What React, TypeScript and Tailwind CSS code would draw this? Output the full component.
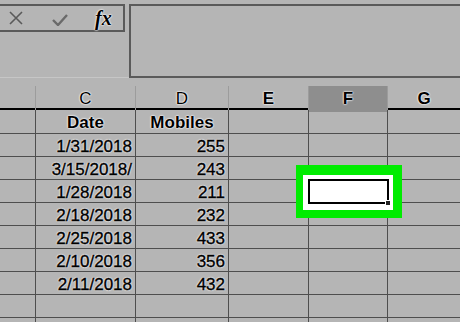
import React from 'react';

const rows: [string, string][] = [
  ['1/31/2018', '255'],
  ['3/15/2018/', '243'],
  ['1/28/2018', '211'],
  ['2/18/2018', '232'],
  ['2/25/2018', '433'],
  ['2/10/2018', '356'],
  ['2/11/2018', '432'],
  ['', ''],
  ['', ''],
];

const cols = 'grid grid-cols-[36px_100px_93px_80px_79px_1fr]';
const halo = '[text-shadow:0_0_1px_#fff,0_0_2px_#fff,0_0_2px_#fff]';
const ink = '[-webkit-text-stroke:0.4px_#000]';
const cell = 'border-r border-[#4e4e4e] h-full';

export default function App() {
  return (
    <div
      className="relative w-[460px] h-[322px] overflow-hidden bg-[#b5b5b5] text-black"
      style={{ fontFamily: '"Liberation Sans", Arial, sans-serif' }}
    >
      {/* Formula bar */}
      <div className="flex h-[78px] pt-[4px] border-b border-[#c6c6c6]">
        <div className="w-[125px] h-[28px] flex items-center border-t-2 border-r-2 border-b-2 border-[#5a5a5a]">
          <svg width="14" height="14" viewBox="0 0 14 14" className="ml-[9px]">
            <path d="M1 1L13 13M13 1L1 13" stroke="#5a5a5a" strokeWidth="1.6" />
          </svg>
          <svg width="16" height="12" viewBox="0 0 16 12" className="ml-[29px] mt-[3px]">
            <path d="M1 6L6 11L15 1" stroke="#6a6a6a" strokeWidth="2.4" fill="none" />
          </svg>
          <span
            className={`ml-[27px] text-[20px] font-bold italic leading-none ${halo}`}
            style={{ fontFamily: '"Liberation Serif", serif' }}
          >
            fx
          </span>
        </div>
        <div className="ml-[4px] flex-1 h-[74px] border-t-2 border-l-2 border-b-2 border-[#5a5a5a]" />
      </div>

      {/* Column headers */}
      <div className={`${cols} h-[32px] pt-[8px] border-b-2 border-black`}>
        <div className="border-r border-[#9c9c9c]" />
        <div className={`border-r border-[#9c9c9c] flex items-center justify-center text-[17px] ${halo}`}>C</div>
        <div className={`border-r border-[#9c9c9c] flex items-center justify-center text-[17px] ${halo}`}>D</div>
        <div className={`border-r border-[#9c9c9c] flex items-center justify-center text-[17px] font-bold ${halo}`}>E</div>
        <div className={`bg-[#8e8e8e] border-r border-[#9c9c9c] flex items-center justify-center text-[17px] font-bold ${halo}`}>F</div>
        <div className={`flex items-center justify-center text-[17px] font-bold ${halo}`}>G</div>
      </div>

      {/* Title row */}
      <div className={`${cols} h-[24px] border-b border-[#4e4e4e]`}>
        <div className={cell} />
        <div className={`${cell} flex items-center justify-center text-[17px] font-bold ${halo}`}>Date</div>
        <div className={`${cell} flex items-center justify-center text-[17px] font-bold ${halo}`}>Mobiles</div>
        <div className={cell} />
        <div className={cell} />
        <div />
      </div>

      {/* Data rows */}
      {rows.map(([date, n], i) => (
        <div key={i} className={`${cols} h-[23px] border-b border-[#4e4e4e]`}>
          <div className={cell} />
          <div className={`${cell} flex items-center justify-end pr-[3px] text-[17px] ${ink} ${halo}`}>{date}</div>
          <div className={`${cell} flex items-center justify-end pr-[3px] text-[17px] ${ink} ${halo}`}>{n}</div>
          <div className={cell} />
          <div className={cell} />
          <div />
        </div>
      ))}

      {/* Selected cell highlight */}
      <div className="absolute left-[296px] top-[165px] w-[106px] h-[53px] bg-[#00ec00] pl-[7px] pr-[9px] pt-[10px] pb-[8px]">
        <div className="w-full h-full bg-white pl-[5px] pr-[4px] pt-[4px] pb-[6px]">
          <div className="relative w-full h-full border-2 border-black">
            <div className="absolute -right-[4px] -bottom-[4px] w-[6px] h-[6px] bg-[#222] border border-white" />
          </div>
        </div>
      </div>
    </div>
  );
}
